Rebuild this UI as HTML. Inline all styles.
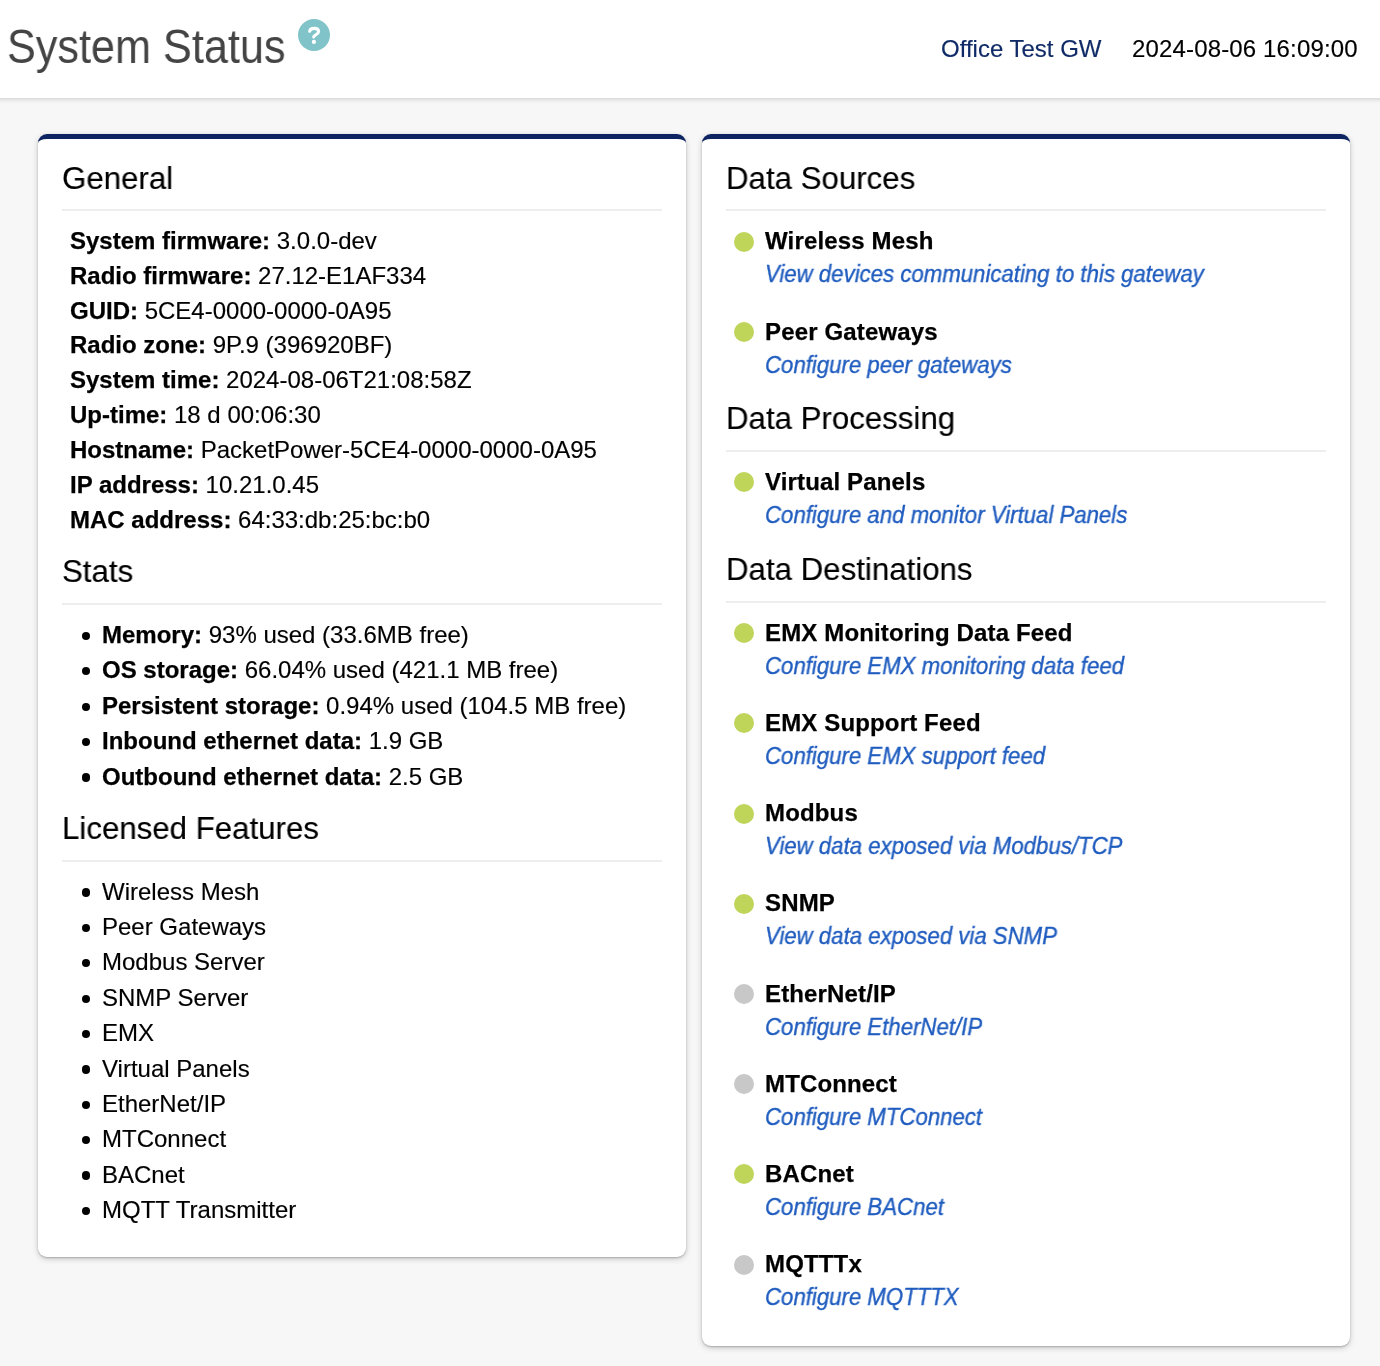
<!DOCTYPE html>
<html><head><meta charset="utf-8"><title>System Status</title><style>
html,body{margin:0;padding:0}
body{width:1380px;height:1366px;overflow:hidden;background:#f7f7f7;position:relative;font-family:"Liberation Sans",sans-serif;color:#000}
#hdr{position:absolute;left:-20px;top:0;width:1420px;height:98px;background:#fff;box-shadow:0 1px 5px rgba(0,0,0,.18)}
.t{position:absolute;line-height:0;white-space:nowrap;z-index:2;will-change:transform;-webkit-text-stroke-width:0.15px}
.ttl{color:#444;transform-origin:0 0;transform:scaleX(0.90);-webkit-text-stroke-width:0}
.gw{color:#0f2a66}
.h{transform-origin:0 0;transform:scaleX(0.976)}
.dt{letter-spacing:0.15px}
.it{letter-spacing:0.15px}
b{-webkit-text-stroke-width:0.25px}
.lnk{color:#1f5cbf;font-style:italic;transform-origin:0 0;transform:scaleX(0.965);-webkit-text-stroke-width:0.35px}
#help{position:absolute;left:298px;top:19px;z-index:2}
.card{position:absolute;background:#fff;border-top:5px solid #0c2461;border-radius:9px;box-shadow:0 2px 6px rgba(0,0,0,.18),0 1px 2px rgba(0,0,0,.22);box-sizing:border-box;z-index:1}
.hr{position:absolute;height:2px;background:#eee;z-index:2}
.bul{position:absolute;left:81.6px;width:8.4px;height:8.4px;border-radius:50%;background:#000;z-index:2}
.dot{position:absolute;left:734px;width:20px;height:20px;border-radius:50%;z-index:2}
.dot.on{background:#bfd55a}
.dot.off{background:#c8c8c8}
</style></head>
<body>
<div id="hdr"></div>
<div class="t ttl" style="left:6.8px;top:47.2px;font-size:48px;">System Status</div>
<svg id="help" width="32" height="32" viewBox="0 0 32 32"><circle cx="16" cy="16" r="16" fill="#80c4c9"/><path d="M11.7 12.3C11.9 10.5 13.8 9.4 16.2 9.4C18.8 9.4 20.6 10.7 20.6 12.6C20.6 14.6 18.6 15.3 17.1 16.3C16.1 17 15.7 17.3 15.7 17.9" fill="none" stroke="#fff" stroke-width="3.1" stroke-linecap="round"/><circle cx="15.9" cy="22.9" r="2.1" fill="#fff"/></svg>
<div class="t gw" style="left:941px;top:49.0px;font-size:24px;">Office Test GW</div>
<div class="t dt" style="left:1132px;top:49.0px;font-size:24px;">2024-08-06 16:09:00</div>
<div class="card" style="left:38px;top:134px;width:648px;height:1123px"></div>
<div class="card" style="left:702px;top:134px;width:648px;height:1212px"></div>
<div class="t h" style="left:62px;top:178.4px;font-size:32px;">General</div>
<div class="hr" style="left:62px;top:209px;width:600px"></div>
<div class="t " style="left:70px;top:240.8px;font-size:24px;"><b>System firmware:</b> 3.0.0-dev</div>
<div class="t " style="left:70px;top:275.7px;font-size:24px;"><b>Radio firmware:</b> 27.12-E1AF334</div>
<div class="t " style="left:70px;top:310.6px;font-size:24px;"><b>GUID:</b> 5CE4-0000-0000-0A95</div>
<div class="t " style="left:70px;top:345.4px;font-size:24px;"><b>Radio zone:</b> 9P.9 (396920BF)</div>
<div class="t " style="left:70px;top:380.3px;font-size:24px;"><b>System time:</b> 2024-08-06T21:08:58Z</div>
<div class="t " style="left:70px;top:415.2px;font-size:24px;"><b>Up-time:</b> 18 d 00:06:30</div>
<div class="t " style="left:70px;top:450.1px;font-size:24px;"><b>Hostname:</b> PacketPower-5CE4-0000-0000-0A95</div>
<div class="t " style="left:70px;top:484.9px;font-size:24px;"><b>IP address:</b> 10.21.0.45</div>
<div class="t " style="left:70px;top:519.8px;font-size:24px;"><b>MAC address:</b> 64:33:db:25:bc:b0</div>
<div class="t h" style="left:62px;top:570.9px;font-size:32px;">Stats</div>
<div class="hr" style="left:62px;top:603px;width:600px"></div>
<div class="bul" style="top:631.6px"></div>
<div class="t " style="left:102px;top:634.9px;font-size:24px;"><b>Memory:</b> 93% used (33.6MB free)</div>
<div class="bul" style="top:667.0px"></div>
<div class="t " style="left:102px;top:670.4px;font-size:24px;"><b>OS storage:</b> 66.04% used (421.1 MB free)</div>
<div class="bul" style="top:702.5px"></div>
<div class="t " style="left:102px;top:705.8px;font-size:24px;"><b>Persistent storage:</b> 0.94% used (104.5 MB free)</div>
<div class="bul" style="top:737.9px"></div>
<div class="t " style="left:102px;top:741.2px;font-size:24px;"><b>Inbound ethernet data:</b> 1.9 GB</div>
<div class="bul" style="top:773.4px"></div>
<div class="t " style="left:102px;top:776.7px;font-size:24px;"><b>Outbound ethernet data:</b> 2.5 GB</div>
<div class="t h" style="left:62px;top:827.9px;font-size:32px;">Licensed Features</div>
<div class="hr" style="left:62px;top:860px;width:600px"></div>
<div class="bul" style="top:888.4px"></div>
<div class="t " style="left:102px;top:891.7px;font-size:24px;">Wireless Mesh</div>
<div class="bul" style="top:923.8px"></div>
<div class="t " style="left:102px;top:927.1px;font-size:24px;">Peer Gateways</div>
<div class="bul" style="top:959.1px"></div>
<div class="t " style="left:102px;top:962.4px;font-size:24px;">Modbus Server</div>
<div class="bul" style="top:994.5px"></div>
<div class="t " style="left:102px;top:997.8px;font-size:24px;">SNMP Server</div>
<div class="bul" style="top:1029.8px"></div>
<div class="t " style="left:102px;top:1033.1px;font-size:24px;">EMX</div>
<div class="bul" style="top:1065.2px"></div>
<div class="t " style="left:102px;top:1068.5px;font-size:24px;">Virtual Panels</div>
<div class="bul" style="top:1100.6px"></div>
<div class="t " style="left:102px;top:1103.9px;font-size:24px;">EtherNet/IP</div>
<div class="bul" style="top:1135.9px"></div>
<div class="t " style="left:102px;top:1139.2px;font-size:24px;">MTConnect</div>
<div class="bul" style="top:1171.3px"></div>
<div class="t " style="left:102px;top:1174.6px;font-size:24px;">BACnet</div>
<div class="bul" style="top:1206.6px"></div>
<div class="t " style="left:102px;top:1209.9px;font-size:24px;">MQTT Transmitter</div>
<div class="t h" style="left:726px;top:177.9px;font-size:32px;">Data Sources</div>
<div class="hr" style="left:726px;top:209px;width:600px"></div>
<div class="dot on" style="top:231.5px"></div>
<div class="t it" style="left:765px;top:241.0px;font-size:24px;"><b>Wireless Mesh</b></div>
<div class="t lnk" style="left:765px;top:274.0px;font-size:23px;">View devices communicating to this gateway</div>
<div class="dot on" style="top:322.3px"></div>
<div class="t it" style="left:765px;top:331.8px;font-size:24px;"><b>Peer Gateways</b></div>
<div class="t lnk" style="left:765px;top:364.8px;font-size:23px;">Configure peer gateways</div>
<div class="t h" style="left:726px;top:417.9px;font-size:32px;">Data Processing</div>
<div class="hr" style="left:726px;top:450px;width:600px"></div>
<div class="dot on" style="top:472.3px"></div>
<div class="t it" style="left:765px;top:481.8px;font-size:24px;"><b>Virtual Panels</b></div>
<div class="t lnk" style="left:765px;top:514.8px;font-size:23px;">Configure and monitor Virtual Panels</div>
<div class="t h" style="left:726px;top:568.8px;font-size:32px;">Data Destinations</div>
<div class="hr" style="left:726px;top:601px;width:600px"></div>
<div class="dot on" style="top:623.2px"></div>
<div class="t it" style="left:765px;top:632.7px;font-size:24px;"><b>EMX Monitoring Data Feed</b></div>
<div class="t lnk" style="left:765px;top:665.7px;font-size:23px;">Configure EMX monitoring data feed</div>
<div class="dot on" style="top:713.4px"></div>
<div class="t it" style="left:765px;top:722.9px;font-size:24px;"><b>EMX Support Feed</b></div>
<div class="t lnk" style="left:765px;top:755.9px;font-size:23px;">Configure EMX support feed</div>
<div class="dot on" style="top:803.6px"></div>
<div class="t it" style="left:765px;top:813.1px;font-size:24px;"><b>Modbus</b></div>
<div class="t lnk" style="left:765px;top:846.1px;font-size:23px;">View data exposed via Modbus/TCP</div>
<div class="dot on" style="top:893.8px"></div>
<div class="t it" style="left:765px;top:903.3px;font-size:24px;"><b>SNMP</b></div>
<div class="t lnk" style="left:765px;top:936.3px;font-size:23px;">View data exposed via SNMP</div>
<div class="dot off" style="top:984.0px"></div>
<div class="t it" style="left:765px;top:993.5px;font-size:24px;"><b>EtherNet/IP</b></div>
<div class="t lnk" style="left:765px;top:1026.5px;font-size:23px;">Configure EtherNet/IP</div>
<div class="dot off" style="top:1074.2px"></div>
<div class="t it" style="left:765px;top:1083.7px;font-size:24px;"><b>MTConnect</b></div>
<div class="t lnk" style="left:765px;top:1116.7px;font-size:23px;">Configure MTConnect</div>
<div class="dot on" style="top:1164.3px"></div>
<div class="t it" style="left:765px;top:1173.8px;font-size:24px;"><b>BACnet</b></div>
<div class="t lnk" style="left:765px;top:1206.8px;font-size:23px;">Configure BACnet</div>
<div class="dot off" style="top:1254.5px"></div>
<div class="t it" style="left:765px;top:1264.0px;font-size:24px;"><b>MQTTTx</b></div>
<div class="t lnk" style="left:765px;top:1297.0px;font-size:23px;">Configure MQTTTX</div>
</body></html>
